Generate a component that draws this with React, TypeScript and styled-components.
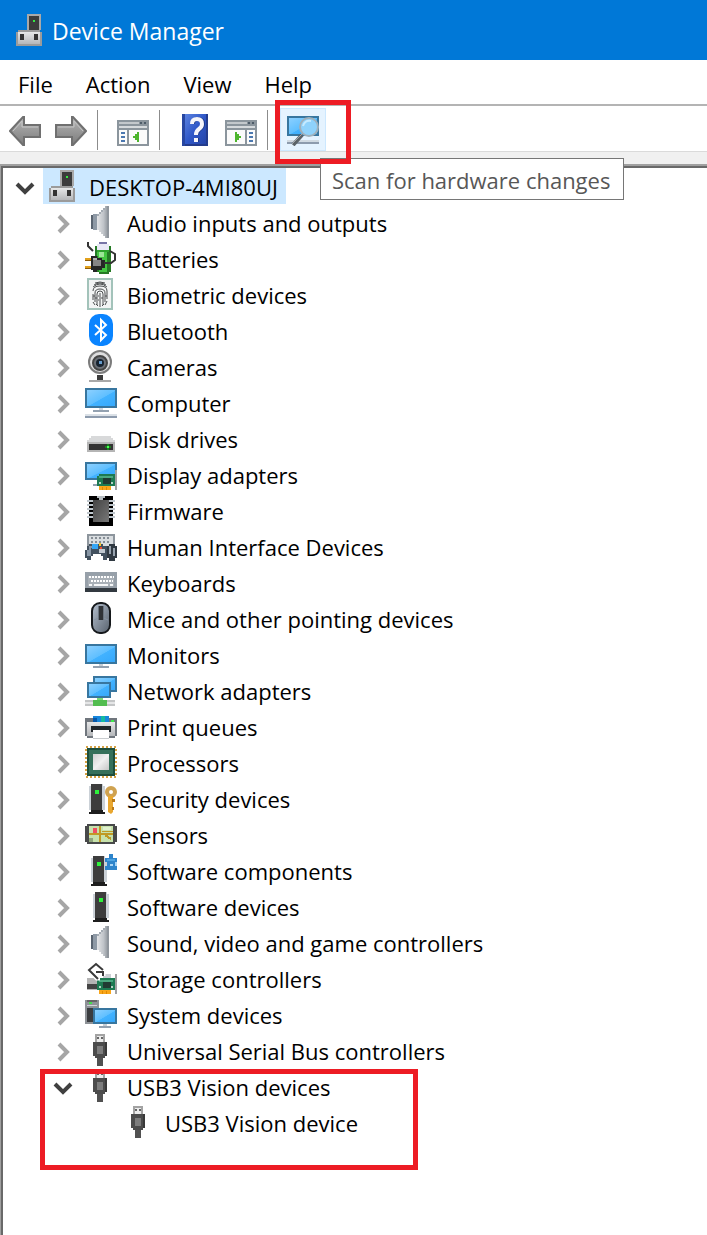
import React from "react";
import styled, { createGlobalStyle } from "styled-components";

const GlobalStyle = createGlobalStyle`
  * { box-sizing: border-box; }
  body {
    margin: 0;
    background: #fff;
    color: #000;
    font-family: "Open Sans", "Noto Sans", sans-serif;
    font-size: 22px;
    line-height: 36px;
  }
  button { font: inherit; color: inherit; }
`;

const Window = styled.div`
  display: flex;
  flex-direction: column;
  min-height: 100vh;
  overflow: hidden;
`;

const TitleBar = styled.header`
  display: flex;
  align-items: center;
  gap: 6px;
  height: 60px;
  padding-left: 14px;
  background: #0078d7;
  color: #fff;
`;

const Title = styled.h1`
  margin: 0;
  padding-top: 2px;
  font-size: 23px;
  font-weight: 400;
`;

const MenuBar = styled.nav`
  display: flex;
  align-items: center;
  gap: 33px;
  height: 44px;
  padding: 4px 18px 0;
`;

const MenuButton = styled.button`
  padding: 0;
  border: 0;
  background: none;
`;

const Toolbar = styled.div`
  display: flex;
  align-items: flex-start;
  height: 48px;
  padding: 2px 2px 0;
  border-top: 2px solid #b4b4b4;
  border-bottom: 1px solid #dadada;
`;

const ToolButton = styled.button<{ $active?: boolean }>`
  display: grid;
  place-items: center;
  width: 46px;
  height: 43px;
  padding: 1px 0 0;
  border: 1px solid ${(p) => (p.$active ? "#cce8ff" : "transparent")};
  background: ${(p) => (p.$active ? "#e5f3ff" : "none")};
`;

const ToolGroup = styled.div`
  display: flex;
  margin-right: 3px;
`;

const Separator = styled.span`
  width: 1px;
  height: 40px;
  margin: 2px 12px 0 0;
  background: #8c8c8c;
`;

const ScanTool = styled.div`
  position: relative;
`;

const Highlight = styled.span`
  position: absolute;
  z-index: 3;
  border: 5px solid #ed1c24;
  pointer-events: none;
`;

const ToolHighlight = styled(Highlight)`
  inset: -8px -25px -13px -5px;
`;

const GroupHighlight = styled(Highlight)`
  top: 1px;
  left: 37px;
  width: 378px;
  height: 101px;
`;

const Tooltip = styled.span`
  position: absolute;
  z-index: 2;
  top: 50px;
  left: 40px;
  padding: 3px 13px 1px 11px;
  border: 1px solid #767676;
  background: #fff;
  color: #575757;
  white-space: nowrap;
`;

const Gutter = styled.div`
  height: 12px;
  background: #f0f0f0;
`;

const TreePane = styled.main`
  display: flex;
  flex: 1;
  border-top: 2px solid #a0a0a0;
  border-left: 1px solid #a0a0a0;
`;

const TreeInner = styled.div`
  flex: 1;
  border-top: 2px solid #696969;
  border-left: 2px solid #696969;
`;

const TreeList = styled.ul`
  margin: 0;
  padding: 0;
  list-style: none;
`;

const TreeItem = styled.li`
  position: relative;
`;

const Row = styled.div<{ $level: number }>`
  display: flex;
  align-items: center;
  height: 36px;
  padding-left: ${(p) => 10 + p.$level * 38}px;
`;

const Toggle = styled.button`
  display: grid;
  place-items: center;
  width: 24px;
  height: 36px;
  padding: 0;
  border: 0;
  background: none;
`;

const ToggleSpace = styled.span`
  width: 24px;
`;

const Entry = styled.span<{ $selected?: boolean }>`
  display: flex;
  align-items: center;
  gap: 10px;
  height: 36px;
  margin-left: 6px;
  padding: 0 8px 0 4px;
  background: ${(p) => (p.$selected ? "#cce8ff" : "none")};
  white-space: nowrap;
`;

const Label = styled.span`
  padding-top: 2px;
`;

const Picture = styled.svg`
  display: block;
  flex: none;
  width: 32px;
  height: 32px;
`;

const Definitions = styled.svg`
  position: absolute;
  width: 0;
  height: 0;
`;

const Icon = ({ children }: { children: React.ReactNode }) => (
  <Picture viewBox="0 0 32 32" shapeRendering="crispEdges" aria-hidden="true">
    {children}
  </Picture>
);

type Box = { x: number; y: number; w: number; h: number };

const Screen = ({ x, y, w, h }: Box) => (
  <>
    <rect x={x} y={y} width={w} height={h} fill="#38769f" />
    <rect x={x + 2} y={y + 2} width={w - 4} height={h - 4} fill="url(#screen)" />
  </>
);

const Tower = ({ x }: { x: number }) => (
  <>
    <path d={`M${x} 4h2v-2h12v2h2v24h-16z`} fill="#cbd1d7" />
    <rect x={x + 2} y="2" width="11" height="26" fill="#3d3d3d" />
    <rect x={x + 6} y="8" width="4" height="4" fill="#2df23b" />
    <path d={`M${x + 2} 28h12v2h2v2h-16v-2h2z`} fill="#1e1e1e" />
  </>
);

const CircuitCard = () => (
  <>
    <path d="M12 18h2v-2h16v12h-18z" fill="#1d7a52" />
    <path d="M14 18h14v2h-14z" fill="#4aa880" />
    <path d="M18 20h8v6h-8z" fill="#203b33" />
    <path d="M14 24h2v2h-2zM26 24h2v2h-2z" fill="#b3d5c4" />
    <path d="M30 12h2v20h-2z" fill="#a2a2a2" />
    <path d="M14 28h12v4h-12z" fill="#f9a61a" />
    <path d="M17 29h1v3h-1zM21 29h1v3h-1z" fill="#e08a00" />
  </>
);

const Gradients = () => (
  <Definitions aria-hidden="true">
    <defs>
      <linearGradient id="screen" x1="0" y1="0" x2="1" y2="1">
        <stop offset="0" stopColor="#8cd0ff" />
        <stop offset=".52" stopColor="#5fbfff" />
        <stop offset=".54" stopColor="#42b2ff" />
        <stop offset="1" stopColor="#36a8fb" />
      </linearGradient>
      <linearGradient id="cone" x1="0" x2="1">
        <stop offset="0" stopColor="#e4e5e7" />
        <stop offset=".55" stopColor="#bfc3c8" />
        <stop offset="1" stopColor="#858b92" />
      </linearGradient>
      <linearGradient id="steel" x1="0" y1="0" x2="0" y2="1">
        <stop offset="0" stopColor="#e6e7e8" />
        <stop offset="1" stopColor="#b5b7ba" />
      </linearGradient>
      <linearGradient id="die" x1="0" y1="0" x2="1" y2="1">
        <stop offset="0" stopColor="#d0d0d0" />
        <stop offset=".5" stopColor="#f0f0f0" />
        <stop offset="1" stopColor="#c6c6c6" />
      </linearGradient>
      <linearGradient id="mouse" x1="0" y1="0" x2="1" y2="1">
        <stop offset="0" stopColor="#b6c1cf" />
        <stop offset="1" stopColor="#57616d" />
      </linearGradient>
      <linearGradient id="chip" x1="0" y1="0" x2="1" y2="1">
        <stop offset="0" stopColor="#444" />
        <stop offset="1" stopColor="#777" />
      </linearGradient>
      <linearGradient id="arrow" x1="0" y1="0" x2="0" y2="1">
        <stop offset="0" stopColor="#b5b5b5" />
        <stop offset="1" stopColor="#7c7c7c" />
      </linearGradient>
      <linearGradient id="book" x1="0" y1="0" x2="1" y2="1">
        <stop offset="0" stopColor="#5b82e0" />
        <stop offset=".5" stopColor="#3058c8" />
        <stop offset="1" stopColor="#2444a8" />
      </linearGradient>
    </defs>
  </Definitions>
);

const DeviceHub = () => (
  <Icon>
    <path d="M13 0h14v16h-14z" fill="#a9a9a9" />
    <path d="M15 2h10v14h-10z" fill="#3c3c3c" />
    <path d="M19 6h2v2h-2z" fill="#35ea43" />
    <path d="M4 16h22v2h2v14h-26v-14h2z" fill="#9b9b9b" />
    <path d="M4 18h22v12h-22z" fill="url(#steel)" />
    <path d="M6 20h4v6h-4zM20 20h4v6h-4z" fill="#333" />
  </Icon>
);

const Speaker = () => (
  <Icon>
    <path d="M6 9h6v14h-6z" fill="#5a6470" />
    <path d="M8 8h4v16h-4z" fill="#8e99a5" />
    <path d="M12 8h2v-2h2v-2h2v-2h2v-2h4v32h-4v-2h-2v-2h-2v-2h-2v-2h-2z" fill="url(#cone)" />
    <path d="M22 0h2v32h-2z" fill="#90969d" />
    <path d="M12 8h2v-2h2v-2h2v-2h2v2h-2v2h-2v2h-2v2h-2z" fill="#a4abb3" />
  </Icon>
);

const Battery = () => (
  <Icon>
    <path d="M12 2h2v-2h8v2h2v2h2v26h-2v2h-10v-2h-4v-26h2z" fill="#267a25" />
    <path d="M12 2h12v6h-12z" fill="#e9e9f6" />
    <path d="M14 0h8v2h-8z" fill="#7774a6" />
    <path d="M12 8h10v22h-8z" fill="#43c541" />
    <path d="M12 8h12v2h-12z" fill="#2fa22e" />
    <path d="M14 10h5v5h-5z" fill="#9de598" />
    <path d="M0 16h8v3h-8zM0 24h8v3h-8z" fill="#e2a11d" />
    <path d="M0 18h8v1h-8zM0 26h8v1h-8z" fill="#8f5d09" />
    <path d="M6 14h6v2h5v2h3v8h-3v2h-5v2h-4v-2h-2z" fill="#262626" />
    <path d="M8 18h8v6h-8z" fill="#858585" />
    <path d="M8 16h4v2h-4z" fill="#b1b1b1" />
    <path
      d="M19 21h7l4-3v-6l-5-3M3 0v4l5 5"
      fill="none"
      stroke="#333"
      strokeWidth="2"
      shapeRendering="auto"
    />
  </Icon>
);

const Fingerprint = () => (
  <Icon>
    <rect x="3" y="1" width="24" height="30" fill="#f2f4f4" stroke="#a3c3ba" strokeWidth="2" />
    <g fill="none" stroke="#4c4f50" strokeWidth="1" shapeRendering="auto">
      <path d="M10 5q5-2 10 0M8 9q7-6 14 0M8 13q0-5 7-5t7 5v8M8 16v6M10 24v-9q0-4 5-4t5 4v9M12 27v-11q0-3 3-3t3 3v11M15 15v14M8 24l2 3M22 23l-2 4" />
      <path d="M9 7q6-4 12 0M11 26l2 2M19 26l-2 2M8 18h2M20 18h2M13 18h1M13 22h1M16 20h2M10 20h2" />
    </g>
  </Icon>
);

const Bluetooth = () => (
  <Icon>
    <rect x="4" y="0" width="24" height="32" rx="10" fill="#0a84ff" shapeRendering="auto" />
    <path d="M10 11l11 10-5 5V6l5 5-11 10" fill="none" stroke="#fff" strokeWidth="2" shapeRendering="auto" />
  </Icon>
);

const Camera = () => (
  <Icon>
    <g shapeRendering="auto">
      <circle cx="15" cy="12" r="11" fill="#dededf" stroke="#7c7c7c" strokeWidth="2" />
      <circle cx="15" cy="13" r="7" fill="#6c7077" stroke="#454545" strokeWidth="2" />
      <circle cx="15" cy="13" r="4" fill="#17222f" />
      <path d="M14 11h3v3h-3z" fill="#659bcc" />
    </g>
    <path d="M12 25h6v5h-6z" fill="#3c3c3c" />
    <path d="M4 30h22v2h-22z" fill="#a8a8a8" />
  </Icon>
);

const Computer = () => (
  <Icon>
    <Screen x={0} y={2} w={32} h={20} />
    <path d="M14 22h4v2h-4z" fill="#cfd6dd" />
    <path d="M8 24h16v2h-16z" fill="#93a1b0" />
    <path d="M0 28h32v2h-32z" fill="#dbe1e7" />
    <path d="M0 30h32v2h-32z" fill="#8d9bad" />
  </Icon>
);

const Disk = () => (
  <Icon>
    <path d="M6 14h20v2h2v2h2v2h-28v-2h2v-2h2z" fill="#d8d9da" />
    <path d="M2 20h28v10h-28z" fill="#b5b5b5" />
    <path d="M4 22h24v6h-24z" fill="#333" />
    <path d="M20 24h6v2h-6zM22 22h2v6h-2z" fill="#1a7f20" />
    <path d="M22 24h2v2h-2z" fill="#4cff55" />
  </Icon>
);

const DisplayAdapter = () => (
  <Icon>
    <Screen x={0} y={4} w={32} h={18} />
    <path d="M8 26h6v2h-6z" fill="#93a1b0" />
    <CircuitCard />
  </Icon>
);

const Chip = () => (
  <Icon>
    <path d="M4 2h8v2h8v-2h8v30h-24z" fill="#000" />
    {[6, 10, 14, 18, 22].map((y) => (
      <path key={y} d={`M2 ${y}h6v2h-6zM24 ${y}h6v2h-6z`} fill="#bfc7cd" />
    ))}
    <path d="M8 6h16v22h-16z" fill="url(#chip)" />
    <path d="M12 2h8v2h-2v2h-4v-2h-2z" fill="#b6bcc0" />
  </Icon>
);

const InputDevices = () => (
  <Icon>
    <path d="M2 4h28v18h-28z" fill="#8d959d" />
    <path d="M4 6h24v14h-24z" fill="#d9dde0" />
    {[8, 12].map((y) => (
      <path key={y} d={`M6 ${y}h20`} stroke="#858d95" strokeWidth="2" strokeDasharray="2 2" />
    ))}
    <path d="M4 14h14v2h4v4h2v8h-2v2h-4v-4h-2v-2h-8v2h-2v4h-4v-2h-2v-8h2v-4h2z" fill="#42505e" />
    <path d="M4 16h4v2h-2v8h-4v-6h2z" fill="#8896a5" />
    <path d="M7 14h6v5h-6z" fill="#36a6f5" />
    <path d="M14 13h2v3h-2z" fill="#f5c52e" />
    <path d="M15 17h2v2h-2z" fill="#e84a33" />
    <path d="M14 19h6v4h-6z" fill="#c0c8d0" />
    <path d="M24 14h6v2h2v12h-2v3h-6v-3h-2v-12h2z" fill="#303942" />
    <path d="M24 16h2v8h-2zM28 18h2v8h-2z" fill="#97a2ae" />
  </Icon>
);

const Keyboard = () => (
  <Icon>
    <path d="M0 6h32v16h-32z" fill="#97a0a9" />
    <path d="M0 22h32v4h-32z" fill="#323940" />
    <path d="M3 10h26v10h-26z" fill="#a9b0b7" />
    <path d="M4 11h25M6 15h22" stroke="#fff" strokeWidth="2" strokeDasharray="2 1" />
    <path d="M4 19h3M9 19h14M25 19h3" stroke="#f6f7f8" strokeWidth="2" />
  </Icon>
);

const Mouse = () => (
  <Icon>
    <g shapeRendering="auto">
      <rect x="7" y="1" width="18" height="30" rx="8" fill="url(#mouse)" stroke="#15181b" strokeWidth="2" />
      <path d="M9 18q7-4 14 0" stroke="#8793a2" fill="none" />
    </g>
    <path d="M13 4h6v14h-6z" fill="#6b7580" />
    <path d="M14 4h4v14h-4z" fill="#303337" />
  </Icon>
);

const Monitor = () => (
  <Icon>
    <Screen x={0} y={6} w={32} h={20} />
    <path d="M14 26h4v2h-4z" fill="#c6ced6" />
    <path d="M8 28h16v2h-16z" fill="#93a1b0" />
  </Icon>
);

const Network = () => (
  <Icon>
    <Screen x={8} y={2} w={24} h={16} />
    <Screen x={2} y={8} w={24} h={16} />
    <path d="M0 26h30v6h-30z" fill="#c3c5c6" />
    <path d="M0 28h30v2h-30z" fill="#e5e6e7" />
    <path d="M12 24h6v2h4v6h-14v-6h4z" fill="#52bd50" />
    <path d="M12 24h6v2h-6z" fill="#79d975" />
  </Icon>
);

const Printer = () => (
  <Icon>
    <path d="M0 8h32v18h-2v2h-28v-2h-2z" fill="#70767d" />
    <path d="M2 12h28v14h-28z" fill="url(#steel)" />
    <path d="M8 6h16v6h-16z" fill="#1787dc" />
    <path d="M16 6h4v6h-4z" fill="#16b99e" />
    <path d="M8 8h4v4h-4z" fill="#0757a8" />
    <path d="M26 10h3v2h-3z" fill="#3de94a" />
    <path d="M6 16h20v6h-20z" fill="#22272c" />
    <path d="M8 20h16v8h-16z" fill="#fff" />
    <path d="M8 28h16v1h-16z" fill="#c9cccf" />
  </Icon>
);

const Processor = () => (
  <Icon>
    <rect x="1" y="1" width="30" height="30" fill="none" stroke="#d6a245" strokeWidth="2" strokeDasharray="2 2" />
    <path d="M2 2h28v28h-28z" fill="#1d4e3c" />
    <path d="M4 4h24v24h-24z" fill="#35705a" />
    <path d="M8 8h16v16h-16z" fill="url(#die)" />
  </Icon>
);

const Security = () => (
  <Icon>
    <Tower x={4} />
    <g shapeRendering="auto">
      <circle cx="26" cy="10" r="4" fill="none" stroke="#cfa250" strokeWidth="4" />
      <path d="M23 14h5v16l-2 2-3-2z" fill="#e9a72f" />
      <path d="M27 17h3v3h-3zM27 25h2v3h-2z" fill="#b97916" />
    </g>
  </Icon>
);

const Sensor = () => (
  <Icon>
    <path d="M2 6h28v2h2v16h-2v2h-28v-2h-2v-16h2z" fill="#48494a" />
    <path d="M4 8h24v16h-24z" fill="#c7e2ac" />
    <path d="M14 8h2v16h-2zM4 15h24v2h-24zM17 13h11v1h-11z" fill="#c09a25" />
    <path d="M20 17l6 4" stroke="#c09a25" strokeWidth="2" />
    <path d="M8 10h4v5h-4z" fill="#f05062" />
    <path d="M4 20h4v4h-4z" fill="#8fa57c" />
    <path d="M18 9h8v3h-8z" fill="#dff1cd" />
  </Icon>
);

const SoftwareComponent = () => (
  <Icon>
    <Tower x={6} />
    <path d="M20 4h4v-4h4v4h4v12h-12v-4h2v-4h-2z" fill="#2d84cb" />
    <path d="M22 5h8v2h-8z" fill="#4aa3e2" />
    <path d="M25 10h3v2h-3zM30 8h2v4h-2z" fill="#a9d5f5" />
  </Icon>
);

const SoftwareDevice = () => (
  <Icon>
    <Tower x={8} />
  </Icon>
);

const Storage = () => (
  <Icon>
    <path d="M2 16h12v12h-12z" fill="#b4b4b4" />
    <path d="M2 22h10v5h-10z" fill="#444" />
    <path d="M18 12h8v6h-8z" fill="#c9cdd2" />
    <CircuitCard />
    <path
      d="M18 8l-7-6-7 6 8 8h3M11 10h7v4"
      fill="none"
      stroke="#fff"
      strokeWidth="5"
      shapeRendering="auto"
    />
    <path
      d="M18 8l-7-6-7 6 9 9M11 10h7v4"
      fill="none"
      stroke="#3a3a3a"
      strokeWidth="2"
      shapeRendering="auto"
    />
  </Icon>
);

const SystemDevice = () => (
  <Icon>
    <path d="M0 2h14v24h-14z" fill="#8e9297" />
    <path d="M2 2h10v2h-10z" fill="#666" />
    <path d="M4 4h3v2h-3z" fill="#45e04e" />
    <path d="M2 10h6v14h-6z" fill="#3b3d40" />
    <path d="M2 7h10v1h-10z" fill="#d1d4d7" />
    <Screen x={8} y={10} w={24} h={16} />
    <path d="M18 26h4v2h-4z" fill="#c6ced6" />
    <path d="M14 28h12v2h-12z" fill="#93a1b0" />
  </Icon>
);

const Usb = () => (
  <Icon>
    <path d="M10 0h10v10h-10z" fill="#a3a3a3" />
    <path d="M12 2h6v7h-6z" fill="#ececec" />
    <path d="M12 3h2v2h-2zM16 3h2v2h-2z" fill="#666" />
    <path d="M8 8h14v14h-2v2h-10v-2h-2z" fill="#4c4c4c" />
    <path d="M12 12h6v8h-6z" fill="#7d7d7d" />
    <path d="M20 8h2v14h-2z" fill="#393939" />
    <path d="M12 24h6v8h-6z" fill="#515151" />
  </Icon>
);

const ArrowIcon = ({ forward }: { forward?: boolean }) => (
  <Icon>
    <g transform={forward ? "matrix(-1 0 0 1 32 0)" : undefined} shapeRendering="auto">
      <path
        d="M1 17L14 3h1v8h16v12H15v8h-1z"
        fill="url(#arrow)"
        stroke="#707070"
        strokeWidth="2"
      />
      <path d="M4 17L13 7v6h16" fill="none" stroke="#c6c6c6" />
    </g>
  </Icon>
);

const PanelIcon = ({ right }: { right?: boolean }) => (
  <Icon>
    <path d="M0 6h32v26h-32z" fill="#8b959d" />
    <path d="M2 8h20v2h-20z" fill="#c3c8cc" />
    <path d="M23 8h2v2h-2zM27 8h2v2h-2z" fill="#4d5b68" />
    <path d="M2 12h28v2h-28z" fill="#d6dadd" />
    <g transform={right ? "matrix(-1 0 0 1 32 0)" : undefined}>
      <path d="M2 16h8v14h-8zM12 16h18v14h-18z" fill="#fbfbfb" />
      <path d="M4 18h4v2h-4zM4 22h4v2h-4zM4 26h4v2h-4z" fill="#4b78b0" />
      <path d="M22 18v10h-2v-2h-2v-2h-2v-2h2v-2h2v-2z" fill="#4db52d" />
    </g>
  </Icon>
);

const HelpIcon = () => (
  <Icon>
    <path d="M3 0h26v32h-26z" fill="#243c8c" />
    <path d="M6 0h21v30h-21z" fill="url(#book)" />
    <path d="M3 0h3v32h-3z" fill="#2746a1" />
    <g fill="none" shapeRendering="auto">
      <path d="M14 10q0-5 5-5t5 5q0 3-3 5t-3 6M18 24v4" stroke="#1d3989" strokeWidth="4" />
      <path d="M13 10q0-5 5-5t5 5q0 3-3 5t-3 6M17 24v4" stroke="#f5f5fa" strokeWidth="4" />
    </g>
  </Icon>
);

const ScanIcon = () => (
  <Icon>
    <Screen x={0} y={2} w={32} h={20} />
    <path d="M0 26h32v2h-32z" fill="#d1dae2" />
    <path d="M0 28h32v2h-32z" fill="#8d9bad" />
    <g shapeRendering="auto">
      <path d="M15 21L6 31" stroke="#5c6368" strokeWidth="4" />
      <path d="M15 20L5 30" stroke="#a4a9ad" strokeWidth="1" />
      <circle cx="22" cy="13" r="9" fill="#8fd2fb" stroke="#9fb0bb" strokeWidth="2" />
      <path d="M16 12q2-6 8-5" fill="none" stroke="#c5eaff" strokeWidth="2" />
    </g>
  </Icon>
);

const Chevron = ({ open }: { open?: boolean }) => (
  <svg width="24" height="24" viewBox="0 0 24 24" fill="none" strokeWidth="4" aria-hidden="true">
    {open ? (
      <path d="M4 10l8 8 8-8" stroke="#404040" />
    ) : (
      <path d="M8 6l8 8-8 8" stroke="#a6a6a6" />
    )}
  </svg>
);

type Device = { name: string; icon: React.ComponentType; children?: Device[] };

const categories: Device[] = [
  { name: "Audio inputs and outputs", icon: Speaker },
  { name: "Batteries", icon: Battery },
  { name: "Biometric devices", icon: Fingerprint },
  { name: "Bluetooth", icon: Bluetooth },
  { name: "Cameras", icon: Camera },
  { name: "Computer", icon: Computer },
  { name: "Disk drives", icon: Disk },
  { name: "Display adapters", icon: DisplayAdapter },
  { name: "Firmware", icon: Chip },
  { name: "Human Interface Devices", icon: InputDevices },
  { name: "Keyboards", icon: Keyboard },
  { name: "Mice and other pointing devices", icon: Mouse },
  { name: "Monitors", icon: Monitor },
  { name: "Network adapters", icon: Network },
  { name: "Print queues", icon: Printer },
  { name: "Processors", icon: Processor },
  { name: "Security devices", icon: Security },
  { name: "Sensors", icon: Sensor },
  { name: "Software components", icon: SoftwareComponent },
  { name: "Software devices", icon: SoftwareDevice },
  { name: "Sound, video and game controllers", icon: Speaker },
  { name: "Storage controllers", icon: Storage },
  { name: "System devices", icon: SystemDevice },
  { name: "Universal Serial Bus controllers", icon: Usb },
  {
    name: "USB3 Vision devices",
    icon: Usb,
    children: [{ name: "USB3 Vision device", icon: Usb }],
  },
];

const Node = ({ device, level }: { device: Device; level: number }) => {
  const Glyph = device.icon;
  const open = Boolean(device.children);
  return (
    <TreeItem>
      <Row $level={level}>
        {level < 2 ? (
          <Toggle aria-label={`Toggle ${device.name}`} aria-expanded={open}>
            <Chevron open={open} />
          </Toggle>
        ) : (
          <ToggleSpace />
        )}
        <Entry $selected={level === 0}>
          <Glyph />
          <Label>{device.name}</Label>
        </Entry>
      </Row>
      {device.children && (
        <TreeList>
          {device.children.map((child) => (
            <Node key={child.name} device={child} level={level + 1} />
          ))}
        </TreeList>
      )}
      {level === 1 && open && <GroupHighlight />}
    </TreeItem>
  );
};

export default function App() {
  return (
    <Window>
      <GlobalStyle />
      <Gradients />
      <TitleBar>
        <DeviceHub />
        <Title>Device Manager</Title>
      </TitleBar>
      <MenuBar>
        {["File", "Action", "View", "Help"].map((item) => (
          <MenuButton key={item}>{item}</MenuButton>
        ))}
      </MenuBar>
      <Toolbar>
        <ToolGroup>
          <ToolButton aria-label="Back"><ArrowIcon /></ToolButton>
          <ToolButton aria-label="Forward"><ArrowIcon forward /></ToolButton>
        </ToolGroup>
        <Separator />
        <ToolGroup>
          <ToolButton aria-label="Show or hide console tree"><PanelIcon /></ToolButton>
        </ToolGroup>
        <Separator />
        <ToolGroup>
          <ToolButton aria-label="Help"><HelpIcon /></ToolButton>
          <ToolButton aria-label="Show or hide action pane"><PanelIcon right /></ToolButton>
        </ToolGroup>
        <Separator />
        <ScanTool>
          <ToolButton $active aria-labelledby="scan-tip"><ScanIcon /></ToolButton>
          <Tooltip id="scan-tip" role="tooltip">Scan for hardware changes</Tooltip>
          <ToolHighlight />
        </ScanTool>
      </Toolbar>
      <Gutter />
      <TreePane>
        <TreeInner>
          <TreeList>
            <Node
              level={0}
              device={{ name: "DESKTOP-4MI80UJ", icon: DeviceHub, children: categories }}
            />
          </TreeList>
        </TreeInner>
      </TreePane>
    </Window>
  );
}
